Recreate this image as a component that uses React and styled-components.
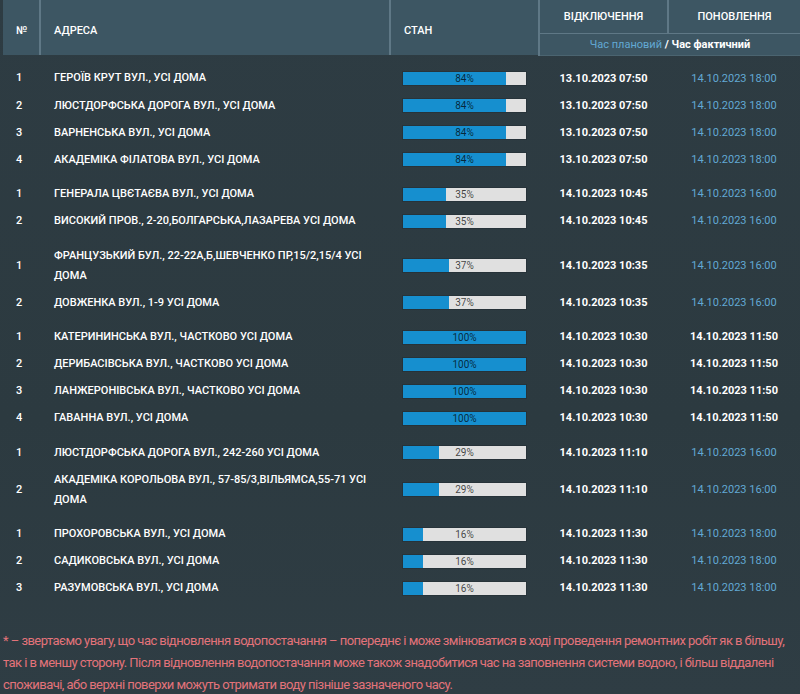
import React from "react";
import styled, { createGlobalStyle } from "styled-components";

const Global = createGlobalStyle`
  html, body { margin: 0; padding: 0; }
  body {
    background: linear-gradient(180deg, #2e3c43 0%, #2c3a40 60%, #2f3d44 100%);
    font-family: Roboto, "Noto Sans", sans-serif;
    color: #fff;
    min-height: 694px;
    overflow: hidden;
  }
`;

const Page = styled.div`
  padding-left: 3px;
  width: 797px;
`;

const Table = styled.table`
  width: 797px;
  border-collapse: collapse;
  table-layout: fixed;
`;

const HeadRow = styled.tr`
  background: #3d5663;
`;

const Th = styled.th`
  font-size: 11px;
  font-weight: 500;
  text-transform: uppercase;
  color: #fff;
  text-align: ${(p) => (p.$center ? "center" : "left")};
  vertical-align: middle;
  height: ${(p) => p.$h || 33}px;
  padding: ${(p) => (p.$tall ? "6px 0 0 13px" : "0")};
  border-right: 2px solid #5f7886;
  border-bottom: ${(p) => (p.$line ? "1px solid #5f7886" : "0")};
  box-sizing: border-box;
  &:last-child { border-right: 0; }
`;

const SubTh = styled.th`
  font-size: 11px;
  font-weight: 400;
  text-align: center;
  height: 21px;
  padding: 0;
  color: #fff;
  border-bottom: 1px solid #4b6470;
`;

const Planned = styled.span`
  color: #62a9d4;
`;
const Actual = styled.span`
  color: #fff;
  font-weight: 700;
`;

const Group = styled.tbody`
  & tr:first-child td { padding-top: ${(p) => (p.$first ? 13 : 11)}px; }
`;

const Td = styled.td`
  font-size: 11px;
  line-height: 20px;
  padding: 3.5px 0 3.5px ${(p) => p.$pl || 0}px;
  padding-right: ${(p) => p.$pr || 0}px;
  text-align: ${(p) => (p.$center ? "center" : "left")};
  vertical-align: middle;
  font-weight: ${(p) => p.$weight || 500};
  color: ${(p) => p.$color || "#fff"};
  text-transform: uppercase;
`;

const Bar = styled.div`
  position: relative;
  width: 123px;
  height: 13px;
  background: #e0e0e0;
  box-shadow: 0 0 0 1px rgba(0, 0, 0, 0.12);
`;

const Fill = styled.div`
  height: 100%;
  background: #168fcf;
`;

const Label = styled.span`
  position: absolute;
  inset: 0;
  text-align: center;
  font-size: 10px;
  line-height: 13px;
  font-weight: 400;
  color: rgba(0, 0, 0, 0.72);
`;

const Note = styled.p`
  margin: 28px 0 0;
  font-size: 13px;
  line-height: 22px;
  letter-spacing: -0.55px;
  color: #e3737a;
  width: 797px;
`;

const groups = [
  {
    off: "13.10.2023 07:50",
    on: "14.10.2023 18:00",
    pct: 84,
    rows: [
      "ГЕРОЇВ КРУТ ВУЛ., УСІ ДОМА",
      "ЛЮСТДОРФСЬКА ДОРОГА ВУЛ., УСІ ДОМА",
      "ВАРНЕНСЬКА ВУЛ., УСІ ДОМА",
      "АКАДЕМІКА ФІЛАТОВА ВУЛ., УСІ ДОМА",
    ],
  },
  {
    off: "14.10.2023 10:45",
    on: "14.10.2023 16:00",
    pct: 35,
    rows: [
      "ГЕНЕРАЛА ЦВЄТАЄВА ВУЛ., УСІ ДОМА",
      "ВИСОКИЙ ПРОВ., 2-20,БОЛГАРСЬКА,ЛАЗАРЕВА УСІ ДОМА",
    ],
  },
  {
    off: "14.10.2023 10:35",
    on: "14.10.2023 16:00",
    pct: 37,
    rows: [
      "ФРАНЦУЗЬКИЙ БУЛ., 22-22А,Б,ШЕВЧЕНКО ПР,15/2,15/4 УСІ ДОМА",
      "ДОВЖЕНКА ВУЛ., 1-9 УСІ ДОМА",
    ],
  },
  {
    off: "14.10.2023 10:30",
    on: "14.10.2023 11:50",
    pct: 100,
    actual: true,
    rows: [
      "КАТЕРИНИНСЬКА ВУЛ., ЧАСТКОВО УСІ ДОМА",
      "ДЕРИБАСІВСЬКА ВУЛ., ЧАСТКОВО УСІ ДОМА",
      "ЛАНЖЕРОНІВСЬКА ВУЛ., ЧАСТКОВО УСІ ДОМА",
      "ГАВАННА ВУЛ., УСІ ДОМА",
    ],
  },
  {
    off: "14.10.2023 11:10",
    on: "14.10.2023 16:00",
    pct: 29,
    rows: [
      "ЛЮСТДОРФСЬКА ДОРОГА ВУЛ., 242-260 УСІ ДОМА",
      "АКАДЕМІКА КОРОЛЬОВА ВУЛ., 57-85/3,ВІЛЬЯМСА,55-71 УСІ ДОМА",
    ],
  },
  {
    off: "14.10.2023 11:30",
    on: "14.10.2023 18:00",
    pct: 16,
    rows: [
      "ПРОХОРОВСЬКА ВУЛ., УСІ ДОМА",
      "САДИКОВСЬКА ВУЛ., УСІ ДОМА",
      "РАЗУМОВСЬКА ВУЛ., УСІ ДОМА",
    ],
  },
];

function Progress({ pct }) {
  return (
    <Bar>
      <Fill style={{ width: `${pct}%` }} />
      <Label>{pct}%</Label>
    </Bar>
  );
}

export default function App() {
  return (
    <>
      <Global />
      <Page>
        <Table>
          <colgroup>
            <col style={{ width: 37 }} />
            <col style={{ width: 350 }} />
            <col style={{ width: 149 }} />
            <col style={{ width: 129 }} />
            <col style={{ width: 132 }} />
          </colgroup>
          <thead>
            <HeadRow>
              <Th rowSpan={2} $tall>№</Th>
              <Th rowSpan={2} $tall>Адреса</Th>
              <Th rowSpan={2} $tall>Стан</Th>
              <Th $center $line>Відключення</Th>
              <Th $center $line>Поновлення</Th>
            </HeadRow>
            <HeadRow>
              <SubTh colSpan={2}>
                <Planned>Час плановий</Planned> <Actual>/ Час фактичний</Actual>
              </SubTh>
            </HeadRow>
          </thead>
          {groups.map((g, gi) => (
            <Group key={gi} $first={gi === 0}>
              {g.rows.map((addr, i) => (
                <tr key={i}>
                  <Td $pl={13}>{i + 1}</Td>
                  <Td $pl={14} $pr={22}>{addr}</Td>
                  <Td $pl={13}>
                    <Progress pct={g.pct} />
                  </Td>
                  <Td $center $weight={700}>{g.off}</Td>
                  <Td
                    $center
                    $weight={g.actual ? 700 : 400}
                    $color={g.actual ? "#fff" : "#62a9d4"}
                  >
                    {g.on}
                  </Td>
                </tr>
              ))}
            </Group>
          ))}
        </Table>
        <Note>
          * – звертаємо увагу, що час відновлення водопостачання – попереднє і
          може змінюватися в ході проведення ремонтних робіт як в більшу, так і в
          меншу сторону. Після відновлення водопостачання може також знадобитися
          час на заповнення системи водою, і більш віддалені споживачі, або
          верхні поверхи можуть отримати воду пізніше зазначеного часу.
        </Note>
      </Page>
    </>
  );
}
